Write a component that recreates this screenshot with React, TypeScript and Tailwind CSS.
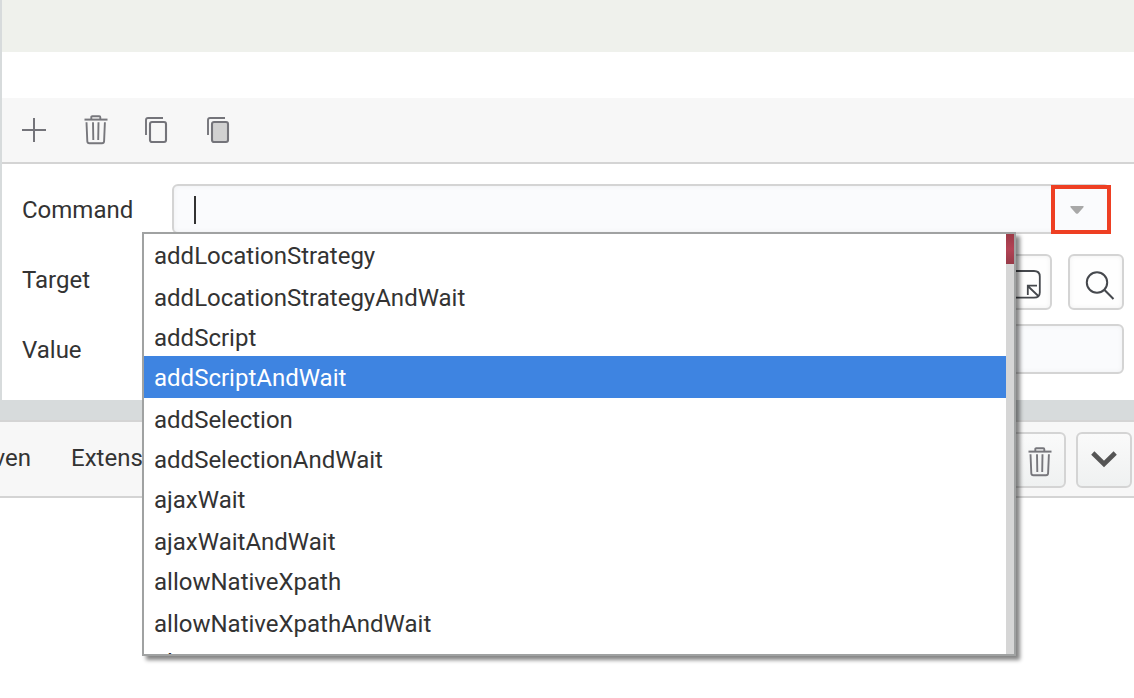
import React from "react";

const commands: { name: string; row: string }[] = [
  { name: "addLocationStrategy", row: "h-[42px]" },
  { name: "addLocationStrategyAndWait", row: "h-10" },
  { name: "addScript", row: "h-10" },
  { name: "addScriptAndWait", row: "h-[42px] bg-[#3e84e1] text-white" },
  { name: "addSelection", row: "h-10" },
  { name: "addSelectionAndWait", row: "h-10" },
  { name: "ajaxWait", row: "h-[42px]" },
  { name: "ajaxWaitAndWait", row: "h-10" },
  { name: "allowNativeXpath", row: "h-[42px]" },
  { name: "allowNativeXpathAndWait", row: "h-[39px]" },
  { name: "altKeyDown", row: "h-10" },
];

function PlusIcon() {
  return (
    <svg width="24" height="24" viewBox="0 0 24 24" fill="none" stroke="#74747a" strokeWidth="2">
      <path d="M12 0V24M0 12H24" />
    </svg>
  );
}

function TrashIcon() {
  return (
    <svg width="24" height="30" viewBox="0 0 24 30" fill="none" stroke="#77777c" strokeWidth="1.9">
      <path d="M0.5 4.6H23.5" strokeWidth="2" />
      <path d="M7.3 4.5V2.2Q7.3 1.2 8.3 1.2H15.3Q16.3 1.2 16.3 2.2V4.5" />
      <path d="M2.5 7.2L3.3 26.3Q3.4 28.3 5.4 28.3H18Q20 28.3 20.1 26.3L20.9 7.2" />
      <path d="M9 7.2L9.3 25M14.5 7.2L14.2 25" />
    </svg>
  );
}

function CopyIcon({ fill }: { fill: string }) {
  return (
    <svg width="24" height="28" viewBox="0 0 24 28" fill="none" stroke="#74747a" strokeWidth="2.1">
      <path d="M1 18V3Q1 1 3 1H18" strokeWidth="1.9" />
      <rect x="5" y="5" width="16" height="20" rx="2" fill={fill} />
    </svg>
  );
}

function Toolbar() {
  return (
    <div className="flex h-[66px] items-start border-b-2 border-[#d4d4d4] bg-[#f7f7f7] pl-5">
      <div className="mt-5"><PlusIcon /></div>
      <div className="mt-[17px] ml-[38px]"><TrashIcon /></div>
      <div className="mt-[19px] ml-[37px]"><CopyIcon fill="none" /></div>
      <div className="mt-[19px] ml-[38px]"><CopyIcon fill="#d1d1d1" /></div>
    </div>
  );
}

function CommandList() {
  return (
    <div className="absolute top-[232px] left-[142px] flex h-[424px] w-[874px] overflow-hidden border-2 border-[#a0a2a2] bg-white shadow-[4px_4px_4px_rgba(0,0,0,0.48)]">
      <ul className="flex-1 overflow-hidden">
        {commands.map((c) => (
          <li key={c.name} className={c.row + " pl-[10px] leading-[45px]"}>
            {c.name}
          </li>
        ))}
      </ul>
      <div className="w-2 bg-[#d6d6d6]">
        <div className="h-[30px] bg-linear-to-b from-[#9c3a47] via-[#b34355] to-[#973b48]" />
      </div>
    </div>
  );
}

export default function App() {
  return (
    <div className="relative h-[698px] w-[1134px] overflow-hidden bg-white font-[Roboto,sans-serif] text-[24px] text-[#333333]">
      <div className="flex h-[400px] flex-col border-l-2 border-[#d7dbdc]">
        <div className="h-[52px] bg-[#eff1ec]" />
        <div className="h-[46px]" />
        <Toolbar />
        <div className="flex h-[90px] items-start pt-5 pl-5">
          <label className="w-[150px] leading-[52px]">Command</label>
          <div className="flex h-[50px] w-[938px] items-start rounded-md border-2 border-[#d4d4d4] bg-[#fafbfd] pt-[10px] pl-5 shadow-[inset_0_0_5px_rgba(0,0,0,0.05)]">
            <span className="h-7 w-0.5 bg-[#333333]" />
          </div>
        </div>
        <div className="flex h-[70px] items-start pl-5">
          <label className="w-[150px] leading-[52px]">Target</label>
          <div className="h-[50px] w-[808px] rounded-md border-2 border-[#d4d4d4] bg-[#fafbfd]" />
          <div className="ml-4 flex h-14 w-14 items-start rounded-md border-2 border-[#d4d4d4] bg-[#fefefe] pt-[14px] pl-[11px] shadow-[inset_0_0_5px_rgba(0,0,0,0.06)]">
            <svg width="32" height="30" viewBox="0 0 32 30" fill="none" stroke="#45484d" strokeWidth="1.8">
              <path d="M0 1H25Q30.8 1 30.8 6.5V22.5Q30.8 27.6 25 27.6H0" />
              <path d="M29.3 26L18.8 16M18.8 25V15.7H28" />
            </svg>
          </div>
          <div className="ml-4 flex h-14 w-14 items-start rounded-md border-2 border-[#d4d4d4] bg-[#fefefe] pt-[15px] pl-[15px] shadow-[inset_0_0_5px_rgba(0,0,0,0.06)]">
            <svg width="30" height="30" viewBox="0 0 30 30" fill="none" stroke="#45484d" strokeWidth="2">
              <circle cx="12" cy="11.5" r="10.2" />
              <path d="M19.3 18.8L28.5 28" />
            </svg>
          </div>
        </div>
        <div className="flex h-[76px] items-start pl-5">
          <label className="w-[150px] leading-[52px]">Value</label>
          <div className="h-[50px] w-[952px] rounded-md border-2 border-[#d4d4d4] bg-[#fafbfd] shadow-[inset_0_0_5px_rgba(0,0,0,0.05)]" />
        </div>
      </div>
      <div className="h-[22px] border-b-2 border-[#d4d4d4] bg-[#d7dbdc]" />
      <div className="flex h-[76px] items-start border-b-2 border-[#d4d4d4] bg-[#f7f7f7] pt-[10px]">
        <span className="flex w-[31px] justify-end whitespace-nowrap leading-[52px]">Data Driven</span>
        <span className="ml-10 w-[939px] leading-[52px]">Extensions</span>
        <div className="flex h-14 w-14 items-start rounded-md border-2 border-[#d4d4d4] bg-linear-to-b from-[#fafafa] to-[#eff1f1] pt-[13px] pl-4">
          <TrashIcon />
        </div>
        <div className="ml-[10px] flex h-14 w-14 items-start rounded-md border-2 border-[#d4d4d4] bg-linear-to-b from-[#fafafa] to-[#eff1f1] pt-[17px] pl-[13px]">
          <svg width="26" height="18" viewBox="0 0 26 18" fill="none" stroke="#555555" strokeWidth="4.6">
            <path d="M1.8 2L13 13L24.2 2" />
          </svg>
        </div>
      </div>
      <div className="absolute top-[185px] left-[1051px] flex h-[49px] w-[60px] items-start border-4 border-[#ee3f23] bg-[#fafbfd] pt-[17px] pl-[15px]">
        <svg width="14" height="8" viewBox="0 0 14 8" fill="#a8a8a8">
          <path d="M1 0H13Q14.3 .3 13.3 1.4L8 7.4Q7 8.3 6 7.4L.7 1.4Q-.3 .3 1 0Z" />
        </svg>
      </div>
      <CommandList />
    </div>
  );
}
